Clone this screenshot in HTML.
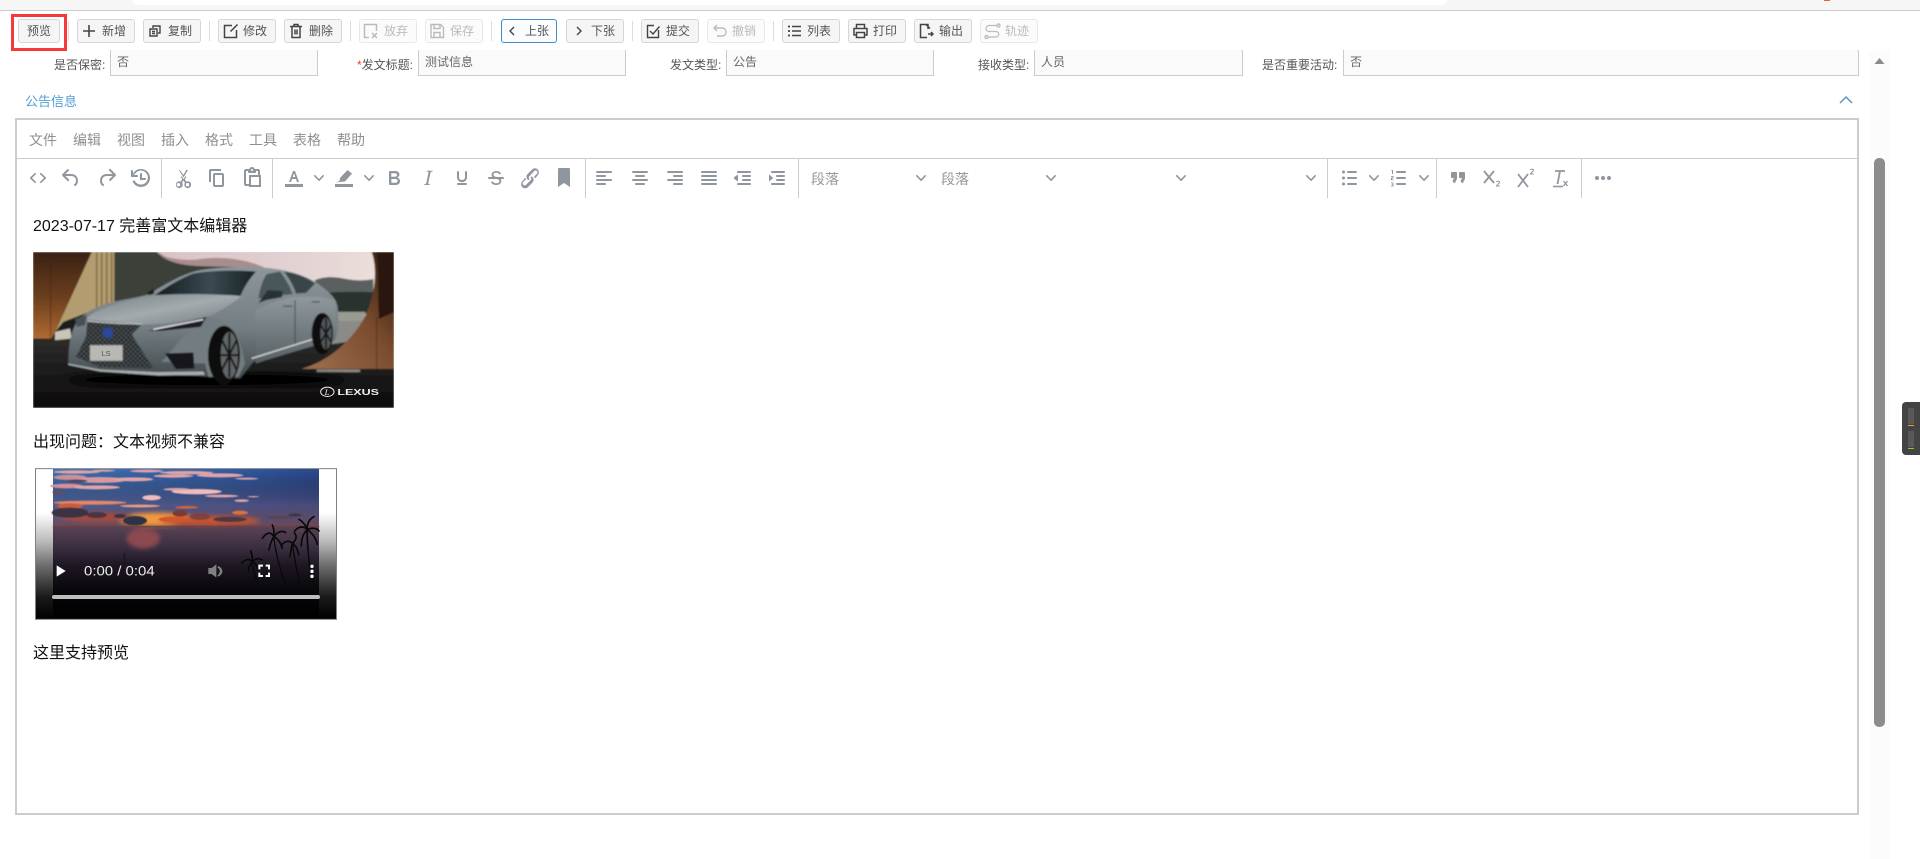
<!DOCTYPE html>
<html lang="zh"><head><meta charset="utf-8"><title>公告信息</title>
<style>
html,body{margin:0;padding:0;background:#fff;width:1920px;height:859px;overflow:hidden}
body{position:relative;font-family:"Liberation Sans","Noto Sans CJK SC",sans-serif;font-size:12px;color:#333}
div,span,svg{position:absolute}
.t{white-space:nowrap;line-height:20px}
.btn{top:19px;width:56px;height:22px;border:1px solid #d6d6d6;border-radius:3px;background:#f5f5f5}
.btn.d{background:#fbfbfb;border-color:#e8e8e8}
.bt{top:21px;white-space:nowrap;line-height:20px;font-size:12px;color:#555}
.bt.d{color:#bbb}
.sep{top:21px;width:1px;height:20px;background:#ddd}
.ic{top:22px;fill:none;stroke:#444;stroke-width:1.4}
.ic.d{stroke:#bbb}
.inp{top:50px;height:25px;background:#fafafa;border:1px solid #ccc;border-top:0}
.lb{top:55px;color:#555;white-space:nowrap;line-height:20px;text-align:right}
.iv{top:52px;color:#666;white-space:nowrap;line-height:20px}
.m{top:130px;font-size:14px;color:#8f8f8f;line-height:20px;white-space:nowrap}
.i{top:166px;fill:#8f969e}
.vs{top:159px;width:1px;height:39px;background:#ccc}
.c{top:173px;fill:#8f969e}
.p{left:33px;font-size:16px;color:#111;line-height:24px;white-space:nowrap}
</style></head><body>
<div style="left:0;top:0;width:1920px;height:10px;background:#f6f6f6"></div>
<div style="left:132px;top:0;width:1315px;height:5px;background:#fff;border-radius:0 0 10px 10px"></div>
<div style="left:1824px;top:0;width:6px;height:1px;background:#e8603c"></div>
<div style="left:0;top:10px;width:1920px;height:1px;background:#ccc"></div>

<div style="left:11px;top:14px;width:50px;height:31px;border:3px solid #f33b3b"></div>
<div class="btn" style="left:18px;width:40px"></div><div class="bt" style="left:27px">预览</div>
<div class="sep" style="left:68px"></div>

<div class="btn" style="left:77px"></div><div class="bt" style="left:102px">新增</div>
<svg class="ic" style="left:81px" width="16" height="18" viewBox="0 0 16 18"><path d="M8 3v12M2 9h12" stroke-width="1.6"/></svg>
<div class="btn" style="left:143px"></div><div class="bt" style="left:168px">复制</div>
<svg class="ic" style="left:148px" width="14" height="18" viewBox="0 0 14 18"><path d="M5 6V4h7v7h-2M2 7h7v7H2zM4 9.500h3M4 11.500h3"/></svg>
<div class="sep" style="left:209px"></div>

<div class="btn" style="left:218px"></div><div class="bt" style="left:243px">修改</div>
<svg class="ic" style="left:223px" width="16" height="18" viewBox="0 0 16 18"><path d="M9 3.500H1.500v12h12V8M14.500 2.500 7.500 9.500" stroke-width="1.500"/></svg>
<div class="btn" style="left:284px"></div><div class="bt" style="left:309px">删除</div>
<svg class="ic" style="left:289px" width="14" height="18" viewBox="0 0 14 18"><path d="M1 4.500h12M5 4.500V2.500h4v2M3 4.500v11h8v-11M6 7.500v5M8 7.500v5" stroke-width="1.500"/></svg>
<div class="sep" style="left:350px"></div>

<div class="btn d" style="left:359px"></div><div class="bt d" style="left:384px">放弃</div>
<svg class="ic d" style="left:363px" width="16" height="18" viewBox="0 0 16 18"><path d="M6 15.500H1.500v-13h12V9M9 11l5 5M14 11l-5 5" stroke-width="1.500"/></svg>
<div class="btn d" style="left:425px"></div><div class="bt d" style="left:450px">保存</div>
<svg class="ic d" style="left:429px" width="16" height="18" viewBox="0 0 16 18"><path d="M2 2.500h9.500l3 3v10H2zM5 2.500v4h6v-4M5 15.500v-5h6v5" stroke-width="1.400"/></svg>
<div class="sep" style="left:491px"></div>

<div class="btn" style="left:501px;width:54px;border-color:#3f8fd0;background:#fafcfe"></div><div class="bt" style="left:525px">上张</div>
<svg class="ic" style="left:507px" width="10" height="18" viewBox="0 0 10 18"><path d="M7 5 3 9l4 4" stroke-width="1.400"/></svg>
<div class="btn" style="left:566px"></div><div class="bt" style="left:591px">下张</div>
<svg class="ic" style="left:573px" width="10" height="18" viewBox="0 0 10 18"><path d="m4 5 4 4-4 4" stroke-width="1.400"/></svg>
<div class="sep" style="left:632px"></div>

<div class="btn" style="left:641px"></div><div class="bt" style="left:666px">提交</div>
<svg class="ic" style="left:646px" width="15" height="18" viewBox="0 0 15 18"><path d="M8 3.500H1.500v12h11V8M4 9l3 3 6.500-7.500" stroke-width="1.400"/></svg>
<div class="btn d" style="left:707px"></div><div class="bt d" style="left:732px">撤销</div>
<svg class="ic d" style="left:712px" width="16" height="18" viewBox="0 0 16 18"><path d="M5 3 2 6l3 3M2 6h8a3.500 3.500 0 0 1 0 8H5" stroke-width="1.400"/></svg>
<div class="sep" style="left:773px"></div>

<div class="btn" style="left:782px"></div><div class="bt" style="left:807px">列表</div>
<svg class="ic" style="left:787px" width="15" height="18" viewBox="0 0 15 18"><path d="M5 4.500h9M5 9h9M5 13.500h9" stroke-width="1.600"/><path d="M1 4.500h2M1 9h2M1 13.500h2" stroke-width="1.800"/></svg>
<div class="btn" style="left:848px"></div><div class="bt" style="left:873px">打印</div>
<svg class="ic" style="left:853px" width="15" height="18" viewBox="0 0 15 18"><path d="M3.500 6V2.500h8V6M3.500 13H1V6.500h13V13h-2.500M3.500 10.500h8v5h-8z" stroke-width="1.500"/></svg>
<div class="btn" style="left:914px"></div><div class="bt" style="left:939px">输出</div>
<svg class="ic" style="left:919px" width="15" height="18" viewBox="0 0 15 18"><path d="M9 7V2.500H1.500v13H8M7 2.500l4 4M9 12h5M12 10l2 2-2 2" stroke-width="1.500"/></svg>
<div class="btn d" style="left:980px"></div><div class="bt d" style="left:1005px">轨迹</div>
<svg class="ic d" style="left:984px" width="17" height="18" viewBox="0 0 17 18"><path d="M13 3.500H5a3 3 0 0 0 0 6h7a2.500 2.500 0 0 1 0 5.500H4" stroke-width="1.200"/><circle cx="14.500" cy="3.500" r="1.500"/><circle cx="2.500" cy="15" r="1.500"/></svg>

<!-- form -->
<div class="inp" style="left:110px;width:206px"></div>
<div class="inp" style="left:418px;width:206px"></div>
<div class="inp" style="left:726px;width:206px"></div>
<div class="inp" style="left:1034px;width:207px"></div>
<div class="inp" style="left:1343px;width:514px"></div>
<div class="lb" style="left:54px">是否保密:</div>
<div class="lb" style="left:357px"><span style="position:static;color:#f33">*</span>发文标题:</div>
<div class="lb" style="left:670px">发文类型:</div>
<div class="lb" style="left:978px">接收类型:</div>
<div class="lb" style="left:1262px">是否重要活动:</div>
<div class="iv" style="left:117px">否</div>
<div class="iv" style="left:425px">测试信息</div>
<div class="iv" style="left:733px">公告</div>
<div class="iv" style="left:1041px">人员</div>
<div class="iv" style="left:1350px">否</div>

<div class="t" style="left:25px;top:92px;font-size:13px;color:#4f9fd9">公告信息</div>
<svg style="left:1838px;top:94px" width="16" height="12" viewBox="0 0 16 12" fill="none" stroke="#5b95c5" stroke-width="1.500"><path d="m2 9 6-6 6 6"/></svg>

<!-- scrollbar -->
<div style="left:1869px;top:51px;width:21px;height:808px;background:#fcfcfc"></div>
<svg style="left:1874px;top:57px" width="11" height="8" viewBox="0 0 11 8"><path d="M5.500 1 10.500 7H.5z" fill="#8c8c8c"/></svg>
<div style="left:1874px;top:158px;width:11px;height:569px;background:#8c8c8c;border-radius:5px"></div>

<!-- widget -->
<div style="left:1902px;top:402px;width:18px;height:53px;background:#444;border-radius:4px 0 0 4px"></div>
<svg style="left:1908px;top:408px" width="7" height="42" viewBox="0 0 7 42"><path d="M0 1h6M0 3h6M0 5h6M0 7h6M0 9h6M0 11h6M0 13h6M0 15h6M0 24h6M0 26h6M0 28h6M0 30h6M0 32h6M0 34h6M0 36h6M0 38h6" stroke="#6e6e6e" stroke-width="1"/><path d="M0 17.500h6" stroke="#e8a030" stroke-width="1"/><path d="M0 40.500h6" stroke="#7ed321" stroke-width="1"/></svg>

<!-- editor -->
<div style="left:15px;top:118px;width:1840px;height:693px;border:2px solid #ccc;background:#fff"></div>
<div style="left:17px;top:158px;width:1840px;height:1px;background:#ccc"></div>
<div class="m" style="left:29px">文件</div><div class="m" style="left:73px">编辑</div><div class="m" style="left:117px">视图</div><div class="m" style="left:161px">插入</div><div class="m" style="left:205px">格式</div><div class="m" style="left:249px">工具</div><div class="m" style="left:293px">表格</div><div class="m" style="left:337px">帮助</div>

<div class="vs" style="left:161px"></div><div class="vs" style="left:272px"></div><div class="vs" style="left:585px"></div><div class="vs" style="left:798px"></div><div class="vs" style="left:1327px"></div><div class="vs" style="left:1436px"></div><div class="vs" style="left:1581px"></div>

<svg class="i" style="left:26px" width="24" height="24" viewBox="0 0 24 24"><path d="M9.800 15.700c.3.300.3.800 0 1-.3.400-.9.400-1.200 0l-4.400-4.100a.8.800 0 0 1 0-1.200l4.400-4.200c.3-.3.900-.3 1.200 0 .3.300.3.800 0 1.100L6 12l3.800 3.700zM14.200 15.700c-.3.300-.3.800 0 1 .4.400.9.400 1.200 0l4.400-4.100c.3-.3.300-.9 0-1.200l-4.400-4.200a.8.800 0 0 0-1.200 0c-.3.300-.3.800 0 1.100L18 12l-3.800 3.700z"/></svg>
<svg class="i" style="left:59px" width="24" height="24" viewBox="0 0 24 24"><path d="M6.400 8H12c3.700 0 6.200 2 6.800 5.100.6 2.700-.4 5.600-2.300 6.800a1 1 0 0 1-1-1.800c1.100-.6 1.800-2.700 1.400-4.600-.5-2.100-2.100-3.500-4.900-3.500H6.400l3.300 3.300a1 1 0 1 1-1.400 1.400l-5-5a1 1 0 0 1 0-1.400l5-5a1 1 0 0 1 1.400 1.400L6.400 8z"/></svg>
<svg class="i" style="left:95px" width="24" height="24" viewBox="0 0 24 24"><path d="M17.600 10H12c-2.800 0-4.400 1.400-4.900 3.500-.4 2 .3 4 1.400 4.600a1 1 0 1 1-1 1.800c-2-1.200-2.900-4.100-2.300-6.800.6-3 3-5.100 6.800-5.100h5.600l-3.300-3.300a1 1 0 1 1 1.400-1.400l5 5a1 1 0 0 1 0 1.400l-5 5a1 1 0 0 1-1.400-1.400l3.300-3.300z"/></svg>
<svg class="i" style="left:128px" width="24" height="24" viewBox="0 0 24 24"><path d="M13 3a9 9 0 1 1-8.500 12l1.900-.7A7 7 0 1 0 7 7.700L5.600 9H9a1 1 0 0 1 0 2H3.500a.5.5 0 0 1-.5-.5V5a1 1 0 0 1 2 0v2.700A9 9 0 0 1 13 3zm0 4a1 1 0 0 1 1 1v4h3a1 1 0 0 1 0 2h-5V8a1 1 0 0 1 1-1z"/></svg>
<svg class="i" style="left:171px" width="24" height="24" viewBox="0 0 24 24"><path d="M8 4l4.500 7.500L17 4h-1.800l-2.700 5L8.800 4zM11.200 13.200l-1.500-2.500 1.200-.3 1.600 2.800 1.700-2.800 1.100.4-1.500 2.500 1.500 2.300a3.400 3.400 0 1 1-1.400 1.200l-1.400-2.300-1.400 2.300a3.400 3.400 0 1 1-1.400-1.200zM7.500 17a1.700 1.700 0 1 0 0 3.400 1.700 1.700 0 0 0 0-3.400zm9 0a1.700 1.700 0 1 0 0 3.400 1.700 1.700 0 0 0 0-3.400z"/></svg>
<svg class="i" style="left:205px" width="24" height="24" viewBox="0 0 24 24"><path d="M16 3H6a2 2 0 0 0-2 2v11h2V5h10V3zm1 4a2 2 0 0 1 2 2v10a2 2 0 0 1-2 2h-7a2 2 0 0 1-2-2V9c0-1.200.9-2 2-2h7zm0 12V9h-7v10h7z"/></svg>
<svg class="i" style="left:240px" width="24" height="24" viewBox="0 0 24 24"><path d="M18 9V5h-2v1c0 .6-.4 1-1 1H9a1 1 0 0 1-1-1V5H6v13h3V9h9zM9 20H6a2 2 0 0 1-2-2V5c0-1.100.9-2 2-2h3.200A3 3 0 0 1 12 1a3 3 0 0 1 2.800 2H18a2 2 0 0 1 2 2v4h1v12H9v-1zm2-9v8h8v-8h-8zM12 3a1 1 0 0 0-1 1c0 .5.4 1 1 1s1-.5 1-1-.4-1-1-1z"/></svg>
<svg class="i" style="left:282px" width="24" height="24" viewBox="0 0 24 24"><path d="M3 18h18v3H3zM7 16 11 5h2l4 11h-2l-1-3h-4l-1 3H7zm3.700-5h2.600L12 7.300 10.700 11z"/></svg>
<svg class="c" style="left:314px" width="10" height="10" viewBox="0 0 10 10"><path d="M8.700 2.200c.3-.3.800-.3 1 0 .4.400.4.900 0 1.200L5.700 7.800c-.3.300-.9.300-1.200 0L.2 3.400a.8.800 0 0 1 0-1.200c.3-.3.800-.3 1.100 0L5 6l3.700-3.800z"/></svg>
<svg class="i" style="left:332px" width="24" height="24" viewBox="0 0 24 24"><path d="M3 18h18v3H3zM15.500 4 20 7.500l-7 8-5.500.5L4 16.500l3.500-1.500.5-3z"/></svg>
<svg class="c" style="left:364px" width="10" height="10" viewBox="0 0 10 10"><path d="M8.700 2.200c.3-.3.800-.3 1 0 .4.400.4.900 0 1.200L5.700 7.800c-.3.300-.9.300-1.200 0L.2 3.400a.8.800 0 0 1 0-1.200c.3-.3.800-.3 1.100 0L5 6l3.700-3.800z"/></svg>
<svg class="i" style="left:382px" width="24" height="24" viewBox="0 0 24 24"><path d="M7.800 19c-.3 0-.5 0-.6-.2l-.2-.5V5.700c0-.2 0-.4.200-.5l.6-.2h5c1.500 0 2.700.3 3.500 1 .7.600 1.100 1.400 1.100 2.500a3 3 0 0 1-.6 1.900c-.4.600-1 1-1.600 1.200.4.100.9.300 1.300.6s.8.700 1 1.200c.4.400.5 1 .5 1.600 0 1.300-.4 2.300-1.300 3-.8.700-2.100 1-3.800 1H7.800zm5-8.300c.6 0 1.200-.1 1.600-.5.400-.3.600-.7.600-1.300 0-1.100-.8-1.700-2.300-1.700H9.300v3.500h3.400zm.5 6c.7 0 1.300-.1 1.700-.4.400-.4.600-.9.600-1.500s-.2-1-.7-1.400c-.4-.3-1-.4-2-.4H9.400v3.800h4z"/></svg>
<svg class="i" style="left:416px" width="24" height="24" viewBox="0 0 24 24"><path d="M16.700 4.700l-.1.900h-.3c-.6 0-1 0-1.400.3-.3.300-.4.600-.5 1.100l-2.100 9.800v.6c0 .5.400.8 1.400.8h.2l-.2.800H8l.2-.8h.2c1.100 0 1.800-.5 2-1.500l2-9.800.1-.5c0-.6-.4-.8-1.400-.8h-.3l.2-.9h5.800z"/></svg>
<svg class="i" style="left:450px" width="24" height="24" viewBox="0 0 24 24"><path d="M16 5c.6 0 1 .4 1 1v5.500a4 4 0 0 1-.4 1.800l-1 1.400a5.300 5.300 0 0 1-5.500 1 5 5 0 0 1-1.600-1c-.5-.4-.8-.9-1.100-1.400a4 4 0 0 1-.4-1.800V6c0-.6.400-1 1-1s1 .4 1 1v5.500c0 .3 0 .6.200 1l.6.700a3.300 3.300 0 0 0 2.200.8 3.400 3.400 0 0 0 2.200-.8c.3-.2.400-.5.600-.8l.2-.9V6c0-.6.400-1 1-1zM8 17h8c.6 0 1 .4 1 1s-.4 1-1 1H8a1 1 0 0 1 0-2z"/></svg>
<svg class="i" style="left:484px" width="24" height="24" viewBox="0 0 24 24"><path d="M15.600 8.500c-.5-.7-1-1.100-1.300-1.300-.6-.4-1.300-.6-2-.6-2.700 0-2.800 1.700-2.800 2.100 0 1.600 1.800 2 3.200 2.300 4.400.9 4.600 2.800 4.600 3.900 0 1.400-.7 4.100-5 4.100A6.200 6.200 0 0 1 7 16.400l1.500-1.100c.4.600 1.600 2 3.700 2 1.600 0 2.500-.4 3-1.200.4-.8.3-2-.8-2.600-.7-.4-1.600-.7-2.900-1-1-.2-3.900-.8-3.900-3.600C7.600 6 10.300 5 12.400 5c2.900 0 4.200 1.600 4.700 2.400l-1.500 1.100z"/><path d="M5 11h14a1 1 0 0 1 0 2H5a1 1 0 0 1 0-2z"/></svg>
<svg class="i" style="left:518px" width="24" height="24" viewBox="0 0 24 24"><path d="M6.200 12.300a1 1 0 0 1 1.400 1.400l-2.100 2.100a2 2 0 1 0 2.800 2.800l4.800-4.800a1 1 0 0 0 0-1.400 1 1 0 1 1 1.300-1.500c1.600 1.500 1.600 4.100 0 5.700l-4.900 4.900a4 4 0 0 1-5.600-5.600l2.300-2.600zm11.600-.6a1 1 0 0 1-1.400-1.400l2.100-2.100a2 2 0 1 0-2.700-2.700L11 10.800a1 1 0 0 0 0 1.400 1 1 0 1 1-1.400 1.400 4 4 0 0 1 0-5.600l4.900-4.900a4 4 0 0 1 5.600 5.600l-2.300 3z"/></svg>
<svg class="i" style="left:552px" width="24" height="24" viewBox="0 0 24 24"><path d="M7 2h10a1 1 0 0 1 1 1v18l-6-4-6 4V3a1 1 0 0 1 1-1z"/></svg>

<svg class="i" style="left:592px" width="24" height="24" viewBox="0 0 24 24"><path d="M5 5h14c.6 0 1 .4 1 1s-.4 1-1 1H5a1 1 0 1 1 0-2zm0 4h8c.6 0 1 .4 1 1s-.4 1-1 1H5a1 1 0 1 1 0-2zm0 8h8c.6 0 1 .4 1 1s-.4 1-1 1H5a1 1 0 0 1 0-2zm0-4h14c.6 0 1 .4 1 1s-.4 1-1 1H5a1 1 0 0 1 0-2z"/></svg>
<svg class="i" style="left:628px" width="24" height="24" viewBox="0 0 24 24"><path d="M5 5h14c.6 0 1 .4 1 1s-.4 1-1 1H5a1 1 0 1 1 0-2zm3 4h8c.6 0 1 .4 1 1s-.4 1-1 1H8a1 1 0 1 1 0-2zm0 8h8c.6 0 1 .4 1 1s-.4 1-1 1H8a1 1 0 0 1 0-2zm-3-4h14c.6 0 1 .4 1 1s-.4 1-1 1H5a1 1 0 0 1 0-2z"/></svg>
<svg class="i" style="left:663px" width="24" height="24" viewBox="0 0 24 24"><path d="M5 5h14c.6 0 1 .4 1 1s-.4 1-1 1H5a1 1 0 1 1 0-2zm6 4h8c.6 0 1 .4 1 1s-.4 1-1 1h-8a1 1 0 0 1 0-2zm0 8h8c.6 0 1 .4 1 1s-.4 1-1 1h-8a1 1 0 0 1 0-2zm-6-4h14c.6 0 1 .4 1 1s-.4 1-1 1H5a1 1 0 0 1 0-2z"/></svg>
<svg class="i" style="left:697px" width="24" height="24" viewBox="0 0 24 24"><path d="M5 5h14c.6 0 1 .4 1 1s-.4 1-1 1H5a1 1 0 1 1 0-2zm0 4h14c.6 0 1 .4 1 1s-.4 1-1 1H5a1 1 0 1 1 0-2zm0 4h14c.6 0 1 .4 1 1s-.4 1-1 1H5a1 1 0 0 1 0-2zm0 4h14c.6 0 1 .4 1 1s-.4 1-1 1H5a1 1 0 0 1 0-2z"/></svg>
<svg class="i" style="left:731px" width="24" height="24" viewBox="0 0 24 24"><path d="M7 5h12c.6 0 1 .4 1 1s-.4 1-1 1H7a1 1 0 1 1 0-2zm5 4h7c.6 0 1 .4 1 1s-.4 1-1 1h-7a1 1 0 0 1 0-2zm0 4h7c.6 0 1 .4 1 1s-.4 1-1 1h-7a1 1 0 0 1 0-2zm-5 4h12a1 1 0 0 1 0 2H7a1 1 0 0 1 0-2zm-2.600-3.200L3 12.500a.7.700 0 0 1 0-1l1.400-1.300L7 8.500v7z"/></svg>
<svg class="i" style="left:765px" width="24" height="24" viewBox="0 0 24 24"><path d="M7 5h12c.6 0 1 .4 1 1s-.4 1-1 1H7a1 1 0 1 1 0-2zm5 4h7c.6 0 1 .4 1 1s-.4 1-1 1h-7a1 1 0 0 1 0-2zm0 4h7c.6 0 1 .4 1 1s-.4 1-1 1h-7a1 1 0 0 1 0-2zm-5 4h12a1 1 0 0 1 0 2H7a1 1 0 0 1 0-2zM4 8.500l3.700 3a.7.700 0 0 1 0 1l-3.700 3z"/></svg>

<div class="m" style="left:811px;top:169px;color:#999">段落</div>
<svg class="c" style="left:916px" width="10" height="10" viewBox="0 0 10 10"><path d="M8.700 2.200c.3-.3.800-.3 1 0 .4.400.4.900 0 1.200L5.700 7.800c-.3.300-.9.300-1.200 0L.2 3.400a.8.800 0 0 1 0-1.200c.3-.3.800-.3 1.100 0L5 6l3.700-3.800z"/></svg>
<div class="m" style="left:941px;top:169px;color:#999">段落</div>
<svg class="c" style="left:1046px" width="10" height="10" viewBox="0 0 10 10"><path d="M8.700 2.200c.3-.3.800-.3 1 0 .4.400.4.900 0 1.200L5.700 7.800c-.3.300-.9.300-1.200 0L.2 3.400a.8.800 0 0 1 0-1.200c.3-.3.800-.3 1.100 0L5 6l3.700-3.800z"/></svg>
<svg class="c" style="left:1176px" width="10" height="10" viewBox="0 0 10 10"><path d="M8.700 2.200c.3-.3.800-.3 1 0 .4.400.4.900 0 1.200L5.700 7.800c-.3.300-.9.300-1.200 0L.2 3.400a.8.800 0 0 1 0-1.200c.3-.3.800-.3 1.100 0L5 6l3.700-3.800z"/></svg>
<svg class="c" style="left:1306px" width="10" height="10" viewBox="0 0 10 10"><path d="M8.700 2.200c.3-.3.800-.3 1 0 .4.400.4.900 0 1.200L5.700 7.800c-.3.300-.9.300-1.200 0L.2 3.400a.8.800 0 0 1 0-1.200c.3-.3.800-.3 1.100 0L5 6l3.700-3.800z"/></svg>

<svg class="i" style="left:1337px" width="24" height="24" viewBox="0 0 24 24"><path d="M11 5h8c.6 0 1 .4 1 1s-.4 1-1 1h-8a1 1 0 0 1 0-2zm0 6h8c.6 0 1 .4 1 1s-.4 1-1 1h-8a1 1 0 0 1 0-2zm0 6h8c.6 0 1 .4 1 1s-.4 1-1 1h-8a1 1 0 0 1 0-2z"/><circle cx="6.500" cy="6" r="1.500"/><circle cx="6.500" cy="12" r="1.500"/><circle cx="6.500" cy="18" r="1.500"/></svg>
<svg class="c" style="left:1369px" width="10" height="10" viewBox="0 0 10 10"><path d="M8.700 2.200c.3-.3.800-.3 1 0 .4.400.4.900 0 1.200L5.700 7.800c-.3.300-.9.300-1.200 0L.2 3.400a.8.800 0 0 1 0-1.200c.3-.3.800-.3 1.100 0L5 6l3.700-3.800z"/></svg>
<svg class="i" style="left:1386px" width="24" height="24" viewBox="0 0 24 24"><path d="M11 5h8c.6 0 1 .4 1 1s-.4 1-1 1h-8a1 1 0 0 1 0-2zm0 6h8c.6 0 1 .4 1 1s-.4 1-1 1h-8a1 1 0 0 1 0-2zm0 6h8c.6 0 1 .4 1 1s-.4 1-1 1h-8a1 1 0 0 1 0-2zM6 4h1v4H6V5H5zM5 10h2.500v2.500H6v1h1.500v.8H5v-2.500h1.500v-1H5zM5 16.500h2.500v4H5v-.7h1.600v-.9H5.500v-.7h1.100v-1H5z"/></svg>
<svg class="c" style="left:1419px" width="10" height="10" viewBox="0 0 10 10"><path d="M8.700 2.200c.3-.3.800-.3 1 0 .4.400.4.900 0 1.200L5.700 7.800c-.3.300-.9.300-1.200 0L.2 3.400a.8.800 0 0 1 0-1.200c.3-.3.800-.3 1.100 0L5 6l3.700-3.800z"/></svg>

<svg class="i" style="left:1446px" width="24" height="24" viewBox="0 0 24 24"><path d="M7.500 17h.9c.4 0 .7-.3.8-.6l1.600-3.200c.1-.2.200-.5.200-.7V7c0-.6-.4-1-1-1H6a1 1 0 0 0-1 1v4c0 .6.400 1 1 1h2l-1.300 2.700a1 1 0 0 0 .8 1.300zm8 0h.9c.4 0 .7-.3.8-.6l1.600-3.200c.1-.2.200-.5.200-.7V7c0-.6-.4-1-1-1h-4a1 1 0 0 0-1 1v4c0 .6.400 1 1 1h2l-1.300 2.700a1 1 0 0 0 .8 1.300z"/></svg>
<svg class="i" style="left:1480px;fill:none;stroke:#8f969e" width="24" height="24" viewBox="0 0 24 24"><path d="m4 5 10 12M14 5 4 17" stroke-width="1.800"/><path d="M16.500 16c.3-1.200 3-1.200 3 .3 0 1-2.500 2.300-3 3.700h3.300" stroke-width="1.100"/></svg>
<svg class="i" style="left:1514px;fill:none;stroke:#8f969e" width="24" height="24" viewBox="0 0 24 24"><path d="m4 8 10 13M14 8 4 21" stroke-width="1.800"/><path d="M16.500 4c.3-1.200 3-1.200 3 .3 0 1-2.500 2.300-3 3.700h3.300" stroke-width="1.100"/></svg>
<svg class="i" style="left:1548px;fill:none;stroke:#8f969e" width="24" height="24" viewBox="0 0 24 24"><path d="M7 5h10M12 5 9.500 18" stroke-width="1.800"/><path d="M5 20.500h10" stroke-width="1.600"/><path d="m15.500 15 4 5M19.500 15l-4 5" stroke-width="1.300"/></svg>
<svg class="i" style="left:1591px" width="24" height="24" viewBox="0 0 24 24"><circle cx="6" cy="12" r="2"/><circle cx="12" cy="12" r="2"/><circle cx="18" cy="12" r="2"/></svg>

<div class="p" style="top:215px">2023-07-17 完善富文本编辑器</div>

<!-- car picture -->
<svg style="left:33px;top:252px" width="361" height="156" viewBox="99 66 1083 467">
<defs>
<linearGradient id="wood" x1="0" y1="0" x2="0" y2="1"><stop offset="0" stop-color="#3a2112"/><stop offset=".55" stop-color="#6e4020"/><stop offset="1" stop-color="#b06a30"/></linearGradient>
<linearGradient id="cop" x1="1" y1="0" x2="0" y2="1"><stop offset="0" stop-color="#2e170c"/><stop offset=".45" stop-color="#7a4c2e"/><stop offset="1" stop-color="#a07050"/></linearGradient>
<linearGradient id="sky" x1="0" y1="0" x2="1" y2="0"><stop offset="0" stop-color="#d9bcc0"/><stop offset=".6" stop-color="#e0cfd0"/><stop offset="1" stop-color="#ebdfdb"/></linearGradient>
<linearGradient id="floor" x1="0" y1="0" x2="0" y2="1"><stop offset="0" stop-color="#2c2c2a"/><stop offset=".45" stop-color="#1c1c1c"/><stop offset="1" stop-color="#0c0a0a"/></linearGradient>
<linearGradient id="body" x1="0" y1="0" x2="0" y2="1"><stop offset="0" stop-color="#8d979b"/><stop offset=".55" stop-color="#737d82"/><stop offset="1" stop-color="#41494d"/></linearGradient>
<linearGradient id="hood" x1="0" y1="0" x2="1" y2="1"><stop offset="0" stop-color="#767f84"/><stop offset=".5" stop-color="#a3abae"/><stop offset="1" stop-color="#6f797d"/></linearGradient>
<linearGradient id="door" x1="0" y1="0" x2="0" y2="1"><stop offset="0" stop-color="#8f989c"/><stop offset="1" stop-color="#566064"/></linearGradient>
<linearGradient id="wind" x1="0" y1="0" x2="1" y2="0"><stop offset="0" stop-color="#141c20"/><stop offset=".55" stop-color="#3b4a50"/><stop offset="1" stop-color="#182126"/></linearGradient>
<pattern id="mesh" width="14" height="14" patternUnits="userSpaceOnUse"><path d="M0 14 14 0M0 0l14 14" stroke="#5e6365" stroke-width="1.800"/></pattern>
<filter id="bl"><feGaussianBlur stdDeviation="2"/></filter>
<filter id="bl2"><feGaussianBlur stdDeviation="10"/></filter>
</defs>
<g filter="url(#bl)">
<rect x="99" y="66" width="1083" height="467" fill="#1a1a1a"/>
<rect x="343" y="66" width="800" height="220" fill="url(#sky)"/>
<path d="M343 66h127c30 15 60 35 130 40 60-2 130 0 190 6L720 220H343z" fill="#3a3f38"/>
<path d="M470 66c25 18 70 26 120 22 70-12 150-2 205 25l-195-5c-50-2-100-10-130-42z" fill="#a98c8f"/>
<path d="M945 150c20-10 55-12 85-5 30 6 60 8 90 2v105H945z" fill="#5a605e"/>
<path d="M945 192c60-8 120-8 180-6v60H945z" fill="#2c322e"/>
<rect x="1010" y="245" width="85" height="28" fill="#9a9a94"/>
<rect x="99" y="325" width="1083" height="208" fill="url(#floor)"/>
<path d="M1010 272h85l-30 60-70 10z" fill="#8a8a86"/>
<path d="M275 66h68v150L190 275l-25 30z" fill="#b29c70"/>
<path d="M290 66v190M305 66v175M320 66v165M335 66v155" stroke="#766540" stroke-width="4"/>
<path d="M99 66h176L155 325H99z" fill="url(#wood)"/>
<path d="M152 66v260" stroke="#3c2412" stroke-width="2"/>
<path d="M165 305l45-10 5 30-50 5z" fill="#c9c5b9"/>
<path d="M1115 66c15 40 15 110-14 180-20 50-90 140-196 170h277V66z" fill="url(#cop)"/>
<path d="M1130 66h52v180l-45 20c-4-70 0-140-7-200z" fill="#2a140a"/>
<path d="M1130 260v160" stroke="#3c2212" stroke-width="2"/>
<rect x="950" y="418" width="130" height="8" fill="#8a8a84"/>
<ellipse cx="620" cy="448" rx="420" ry="22" fill="#040404" filter="url(#bl2)"/>
<path d="M205 405C205 360 208 320 225 285 240 255 280 232 330 218 380 205 430 200 450 190 490 165 540 135 590 122 650 110 740 108 800 113 860 118 920 135 960 165 985 185 1005 200 1012 225 1018 260 1015 300 1005 330L950 345 760 395 720 445 630 440 480 432 300 420Z" fill="url(#body)"/>
<path d="M262 262C290 235 370 212 450 197 540 192 650 192 725 198 690 225 650 250 620 260 540 275 480 285 430 283L262 268Z" fill="url(#hood)"/>
<path d="M465 195C500 170 540 145 580 130 640 120 710 120 768 124 745 150 730 175 722 197 640 190 540 190 465 195Z" fill="url(#wind)"/>
<path d="M775 205C780 175 790 145 800 132L840 124C860 150 870 170 878 192L820 197Z" fill="#4a565c"/>
<path d="M852 125C880 127 920 140 945 160L918 188 888 190C880 165 868 145 852 125Z" fill="#39444a"/>
<path d="M440 190l20-15 3 15-15 5z" fill="#1c1c1c"/>
<path d="M775 218l28-38 45 3-2 18-45 8z" fill="#283034"/>
<path d="M620 260c60 5 100 40 115 140l-20 40h-90l-10-40-130-5 60-70z" fill="#737d81"/>
<path d="M765 240c40-20 80-35 120-40l70 0 50 10 8 80-15 40-200 60-30 10z" fill="url(#door)"/>
<path d="M885 210v130M850 228h28M935 215h25" stroke="#3e4549" stroke-width="3"/>
<path d="M755 385 945 325" stroke="#d6d8d8" stroke-width="4"/>
<path d="M262 275l163 8-30 30 65 102-160-5-72-30 30-60z" fill="#1e2225"/>
<path d="M262 275l163 8-30 30 65 102-160-5-72-30 30-60z" fill="url(#mesh)"/>
<path d="M262 272c50 8 110 8 165 10" stroke="#c6cacc" stroke-width="3" fill="none"/>
<path d="M445 302l175-42-18 30-120 12z" fill="#1c1e20"/>
<path d="M460 298l150-30" stroke="#eef" stroke-width="4"/>
<path d="M225 265l35-10-5 30-25 5z" fill="#4a5054"/>
<rect x="270" y="345" width="98" height="47" fill="#b8b8b4"/>
<circle cx="323" cy="308" r="16" fill="#2a4a9a"/>
<path d="M495 370l85-3 3 48-55 2z" fill="#16191b"/>
<path d="M205 400l95 18 170 8 140-2 5 10-140 2-175-12-95-20z" fill="#a9adae"/>
<ellipse cx="672" cy="375" rx="48" ry="88" fill="#0a0a0a"/>
<ellipse cx="688" cy="375" rx="26" ry="70" fill="#626669"/>
<path d="M688 308v134M667 332l42 85M667 417l42-85M662 375h52" stroke="#141617" stroke-width="6"/>
<ellipse cx="967" cy="310" rx="32" ry="62" fill="#0e0e0e"/>
<ellipse cx="978" cy="310" rx="17" ry="48" fill="#55595c"/>
<path d="M978 264v92M963 286l30 48M963 334l30-48" stroke="#141516" stroke-width="5"/>
</g>
<ellipse cx="982" cy="485" rx="20" ry="14" fill="none" stroke="#eee" stroke-width="3"/>
<text x="974" y="495" font-size="26" font-family="Liberation Serif,serif" font-style="italic" fill="#eee">L</text>
<text x="1012" y="494" font-size="24" font-weight="bold" font-family="Liberation Sans,sans-serif" fill="#eee" textLength="125" lengthAdjust="spacingAndGlyphs">LEXUS</text>
<text x="305" y="378" font-size="22" font-family="Liberation Sans,sans-serif" fill="#555">LS</text>
</svg>

<div class="p" style="top:431px">出现问题：文本视频不兼容</div>

<!-- video -->
<svg style="left:0;top:430px" width="420" height="240" viewBox="0 0 1260 720">
<defs>
<linearGradient id="vg" x1="0" y1="0" x2="0" y2="1"><stop offset="0" stop-color="#fff"/><stop offset=".29" stop-color="#fff"/><stop offset=".48" stop-color="#bbb"/><stop offset=".65" stop-color="#6a6a6a"/><stop offset=".85" stop-color="#1a1a1a"/><stop offset="1" stop-color="#000"/></linearGradient>
<linearGradient id="vs2" x1="0" y1="0" x2="1" y2="0"><stop offset="0" stop-color="#3f74b8"/><stop offset=".6" stop-color="#3560a8"/><stop offset="1" stop-color="#2c4a90"/></linearGradient>
<linearGradient id="vs3" x1="0" y1="0" x2="0" y2="1"><stop offset="0" stop-color="#000" stop-opacity="0"/><stop offset=".6" stop-color="#5a4a6c" stop-opacity=".6"/><stop offset="1" stop-color="#6a4a5a"/></linearGradient>
<linearGradient id="sea" x1="0" y1="0" x2="0" y2="1"><stop offset="0" stop-color="#574254"/><stop offset=".22" stop-color="#3a2e40"/><stop offset=".42" stop-color="#1e1722"/><stop offset=".7" stop-color="#07060a"/><stop offset="1" stop-color="#000"/></linearGradient>
<filter id="b2"><feGaussianBlur stdDeviation="1.600"/></filter>
<filter id="b3"><feGaussianBlur stdDeviation="6"/></filter>
</defs>
<rect x="106.500" y="116" width="903" height="452" fill="url(#vg)" stroke="#808080" stroke-width="3"/>
<rect x="159" y="117" width="798" height="178" fill="url(#vs2)"/>
<rect x="159" y="117" width="798" height="178" fill="url(#vs3)"/>
<rect x="159" y="293" width="798" height="272" fill="url(#sea)"/>
<g filter="url(#b3)">
<ellipse cx="470" cy="268" rx="120" ry="20" fill="#f0983e"/>
<ellipse cx="630" cy="272" rx="150" ry="14" fill="#c8522e"/>
<ellipse cx="290" cy="262" rx="110" ry="14" fill="#a8483a"/>
<ellipse cx="430" cy="325" rx="50" ry="30" fill="#8c4850"/>
</g>
<g filter="url(#b2)" fill="#e0a4a8">
<ellipse cx="230" cy="126" rx="70" ry="5"/><ellipse cx="310" cy="122" rx="35" ry="3"/><ellipse cx="440" cy="123" rx="50" ry="4"/><ellipse cx="560" cy="128" rx="80" ry="5"/><ellipse cx="660" cy="136" rx="70" ry="6"/><ellipse cx="740" cy="146" rx="35" ry="3"/>
<ellipse cx="210" cy="142" rx="50" ry="8" fill="#c89098"/><ellipse cx="300" cy="150" rx="80" ry="9" fill="#d898a0"/><ellipse cx="200" cy="168" rx="50" ry="7" fill="#d89098"/><ellipse cx="290" cy="172" rx="70" ry="6"/><ellipse cx="400" cy="148" rx="60" ry="6"/><ellipse cx="520" cy="138" rx="60" ry="5"/>
<ellipse cx="590" cy="185" rx="75" ry="8" fill="#efbcc0"/><ellipse cx="455" cy="203" rx="28" ry="8" fill="#efbcc0"/><ellipse cx="530" cy="178" rx="40" ry="4"/><ellipse cx="665" cy="198" rx="50" ry="4"/><ellipse cx="725" cy="212" rx="22" ry="4"/><ellipse cx="760" cy="200" rx="18" ry="2"/>
<ellipse cx="230" cy="153" rx="32" ry="5" fill="#4e4a66"/><ellipse cx="175" cy="187" rx="18" ry="5" fill="#6a4a5c"/>
<ellipse cx="270" cy="218" rx="110" ry="6" fill="#e0886a"/><ellipse cx="420" cy="228" rx="60" ry="4" fill="#e8a080"/><ellipse cx="560" cy="232" rx="35" ry="4" fill="#c8684a"/><ellipse cx="210" cy="228" rx="40" ry="8" fill="#c85c40"/>
<ellipse cx="210" cy="248" rx="55" ry="15" fill="#3b3345"/><ellipse cx="290" cy="255" rx="30" ry="9" fill="#4a3542"/><ellipse cx="360" cy="258" rx="18" ry="6" fill="#3a3044"/>
<ellipse cx="405" cy="272" rx="36" ry="14" fill="#2d3044"/><ellipse cx="540" cy="250" rx="22" ry="10" fill="#7a3b34"/><ellipse cx="600" cy="260" rx="30" ry="10" fill="#84403a"/>
<ellipse cx="520" cy="268" rx="45" ry="8" fill="#d4562a"/><ellipse cx="720" cy="248" rx="24" ry="6" fill="#e0703a"/><ellipse cx="690" cy="268" rx="50" ry="8" fill="#503840"/><ellipse cx="840" cy="262" rx="40" ry="4" fill="#544550"/><ellipse cx="885" cy="255" rx="20" ry="4" fill="#3a3442"/>
<rect x="159" y="288" width="798" height="5" fill="#6a3a3c"/>
</g>
<g fill="none" stroke="#070a09" stroke-linecap="round">
<path d="M822 325c5 50 25 120 48 170M878 345c5 45 15 90 28 150M922 300c0 60 5 120 22 175M755 400c10 30 15 60 25 85" stroke-width="4"/>
<g stroke-width="5">
<path d="M822 320c-10-15-20-15-35 5M822 320c-8 10-12 25-15 40M822 320c10-15 25-20 35-12M822 320c10 5 22 20 25 35M822 320c0-15 0-25-5-35"/>
<path d="M878 340c-10-10-25-8-35 8M878 340c-5 10-5 25-8 40M878 340c10-10 15-20 5-32M878 340c8 8 15 15 18 35"/>
<path d="M922 298c-12-10-25-10-38 5M922 298c-12 12-18 30-18 50M922 298c-2 15 0 35 2 60M922 298c10 10 25 20 30 45M922 298c-2-15 5-30 20-38M922 298c-5-12-15-25-25-30M922 298c15-5 28-5 35 5"/>
<path d="M757 395c-10-10-20-8-32 4M757 395c-8 8-10 15-12 28M757 395c10-10 20-12 30-5M757 395c8 5 15 12 18 25M757 395c0-12 0-20-5-32"/>
</g>
<g stroke-width="4" stroke="#1a1620">
<path d="M375 400c-12 0-25 5-35 15M375 400c10 0 25 3 32 12M375 400c0-12 0-22-3-30"/>
</g>
</g>
<path d="M170 406l27 17-27 17z" fill="#fff"/>
<text x="252" y="437" font-family="Liberation Sans,sans-serif" font-size="42" fill="#eee" textLength="212" lengthAdjust="spacingAndGlyphs">0:00 / 0:04</text>
<path d="M625 414h10l14-11v40l-14-11h-10z" fill="#808080"/>
<path d="M655 408c16 8 16 24 0 32l-3-4c10-7 10-17 0-24z" fill="#808080"/>
<path d="M778 418v-11h11M797 407h10v11M807 428v10h-10M789 438h-11v-10" fill="none" stroke="#fff" stroke-width="6"/>
<circle cx="936" cy="409" r="5" fill="#fff"/><circle cx="936" cy="424" r="5" fill="#fff"/><circle cx="936" cy="439" r="5" fill="#fff"/>
<rect x="156" y="495" width="804" height="12" rx="6" fill="#bdbdbd"/>
</svg>

<div class="p" style="top:642px">这里支持预览</div>
</body></html>
